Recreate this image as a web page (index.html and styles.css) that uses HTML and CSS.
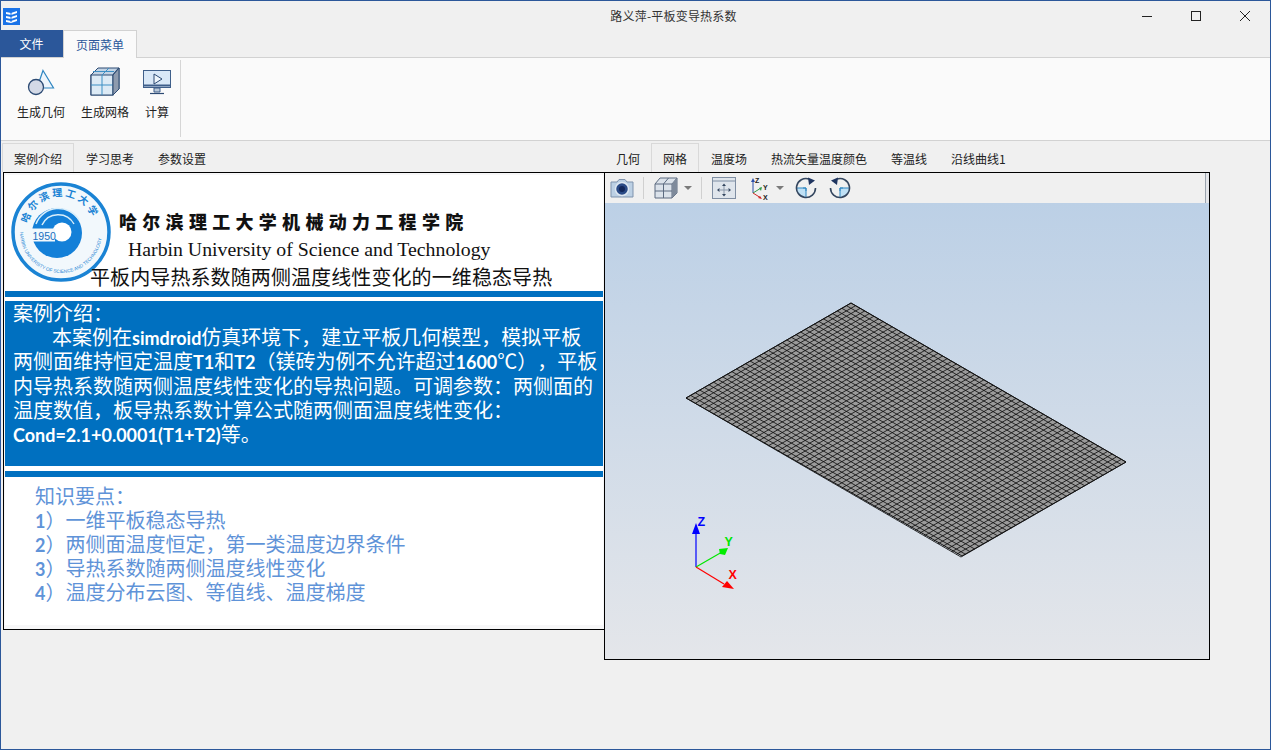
FILE: index.html
```html
<!DOCTYPE html>
<html lang="zh">
<head>
<meta charset="utf-8">
<title>路义萍-平板变导热系数</title>
<link rel="stylesheet" href="styles.css">
</head>
<body>
<div class="window">
  <header class="titlebar">
    <svg class="app-icon" width="17" height="17" viewBox="0 0 17 17"><rect width="17" height="17" fill="#1a73e8"/><path d="M3 4l5 1 6-2v2l-6 2-5-1zM3 8l5 1 6-2v2l-6 2-5-1zM3 12l5 1 6-2v2l-6 2-5-1z" fill="#fff"/><path d="M8 3v11" stroke="#1a73e8"/></svg>
    <div class="title">路义萍-平板变导热系数</div>
    <div class="win-btns">
      <svg width="12" height="12" viewBox="0 0 12 12"><path d="M1 6.500h10" stroke="#222"/></svg>
      <svg width="12" height="12" viewBox="0 0 12 12"><rect x="1.500" y="1.500" width="9" height="9" fill="none" stroke="#222"/></svg>
      <svg width="12" height="12" viewBox="0 0 12 12"><path d="M1 1l10 10M11 1L1 11" stroke="#222"/></svg>
    </div>
  </header>

  <nav class="menu-tabs">
    <div class="file-tab">文件</div>
    <div class="page-tab">页面菜单</div>
  </nav>

  <section class="ribbon">
    <div class="ribbon-group">
      <div class="ribbon-btn btn-geo">
        <svg width="28" height="28" viewBox="0 0 28 28"><path d="M16 2.500L26.500 20H10z" fill="#eef5fb" stroke="#2f86c1" stroke-width="1.200"/><circle cx="9" cy="19" r="7.500" fill="#d3d9e6" stroke="#2c4a73" stroke-width="1.300"/></svg>
        <span>生成几何</span>
      </div>
      <div class="ribbon-btn btn-mesh">
        <svg width="30" height="30" viewBox="0 0 30 30"><path d="M1 9l7-7h21v21l-6 6H1z" fill="#c3d3e4" stroke="#2c4a73"/><path d="M1 9h22v20H1z" fill="#dceaf5"/><path d="M1 9h22v20H1zM23 9l6-7" fill="none" stroke="#2c4a73" stroke-width="1.200"/><path d="M12 9v20M1 19h22M12 9l7-7M3 5.500h21" stroke="#3d8fc4" fill="none"/><path d="M23 9l6-7v21l-6 6z" fill="#8e9bae" stroke="#2c4a73"/></svg>
        <span>生成网格</span>
      </div>
      <div class="ribbon-btn btn-calc">
        <svg width="28" height="25" viewBox="0 0 28 25"><rect x=".5" y=".5" width="27" height="17" fill="#d9e8f7" stroke="#3f5f8a"/><path d="M.5 15.500h27" stroke="#3f5f8a" stroke-width="2"/><path d="M11 4l8 5-8 5z" fill="#eef5fb" stroke="#2c4a73"/><path d="M11 18h6v4h-6z" fill="#b9c8d8" stroke="#3f5f8a"/><path d="M7 23.500h14" stroke="#2c4a73" stroke-width="1.200"/></svg>
        <span>计算</span>
      </div>
    </div>
  </section>

  <main class="workspace">
    <section class="left-col">
      <div class="tabs">
        <div class="tab active">案例介绍</div>
        <div class="tab">学习思考</div>
        <div class="tab">参数设置</div>
      </div>
      <div class="slide-frame">
        <div class="slide">
          <div class="slide-head">
            <svg class="logo" width="102" height="102" viewBox="0 0 102 102">
              <defs>
                <path id="arcTop" d="M18.100 43.500A33.500 33.500 0 0 1 83.900 43.500"/>
                <path id="arcBot" d="M10 52A41 41 0 0 0 92 52"/>
              </defs>
              <circle cx="51" cy="52" r="48" fill="#f2f8fc" stroke="#1a83d4" stroke-width="3.500"/>
              <circle cx="47" cy="53" r="25" fill="#1480d8"/>
              <path d="M26 44A24 24 0 0 1 69 40" fill="none" stroke="#d9eefa" stroke-width="1.500"/>
              <path d="M32 45A18 18 0 0 1 64 44" fill="none" stroke="#d9eefa" stroke-width="1.500"/>
              <circle cx="52" cy="52" r="9.500" fill="#fff"/>
              <rect x="22" y="48.500" width="23" height="13" fill="#f2f8fc"/>
              <text class="logo-year" x="22.500" y="59.500">1950</text>
              <text class="logo-cn"><textPath href="#arcTop">哈尔滨理工大学</textPath></text>
              <text class="logo-en"><textPath href="#arcBot">HARBIN UNIVERSITY OF SCIENCE AND TECHNOLOGY</textPath></text>
            </svg>
            <div class="school-cn">哈尔滨理工大学机械动力工程学院</div>
            <div class="school-en">Harbin University of Science and Technology</div>
            <div class="slide-title">平板内导热系数随两侧温度线性变化的一维稳态导热</div>
          </div>
          <div class="stripe stripe-top"></div>
          <div class="intro">
            <p>案例介绍：</p>
            <p class="indent">本案例在<span class="lat">simdroid</span>仿真环境下，建立平板几何模型，模拟平板</p>
            <p>两侧面维持恒定温度<span class="lat">T1</span>和<span class="lat">T2</span>（镁砖为例不允许超过<span class="lat">1600</span>℃），平板</p>
            <p>内导热系数随两侧温度线性变化的导热问题。可调参数：两侧面的</p>
            <p>温度数值，板导热系数计算公式随两侧面温度线性变化：</p>
            <p><span class="lat">Cond=2.1+0.0001(T1+T2)</span>等。</p>
          </div>
          <div class="stripe stripe-bottom"></div>
          <div class="points">
            <p>知识要点：</p>
            <p><span class="lat">1</span>）一维平板稳态导热</p>
            <p><span class="lat">2</span>）两侧面温度恒定，第一类温度边界条件</p>
            <p><span class="lat">3</span>）导热系数随两侧温度线性变化</p>
            <p><span class="lat">4</span>）温度分布云图、等值线、温度梯度</p>
          </div>
        </div>
      </div>
    </section>

    <section class="right-col">
      <div class="tabs">
        <div class="tab">几何</div>
        <div class="tab active">网格</div>
        <div class="tab">温度场</div>
        <div class="tab">热流矢量温度颜色</div>
        <div class="tab">等温线</div>
        <div class="tab">沿线曲线1</div>
      </div>
      <div class="view-frame">
        <div class="toolbar">
          <svg class="t-cam" width="24" height="20" viewBox="0 0 24 20"><path d="M1 4h6l2-2.500h6L17 4h6v15H1z" fill="#bcd0e4" stroke="#7f93ad"/><circle cx="12" cy="11" r="6.500" fill="#2a4a86" stroke="#dfe8f2" stroke-width="1.500"/><circle cx="12" cy="11" r="3" fill="#12275a"/></svg>
          <span class="t-sep"></span>
          <svg class="t-cube" width="24" height="22" viewBox="0 0 24 22"><path d="M1 7l5-6h17v15l-5 5H1z" fill="#dbe2ea" stroke="#5c6b80"/><path d="M1 7h17v14M9.500 7v14M1 14h17M9.500 7l5-6M18 7l5-6" fill="none" stroke="#5c6b80"/><path d="M18 7l5-6v15l-5 5z" fill="#7e8a9b"/></svg>
          <span class="t-arrow"></span>
          <span class="t-sep"></span>
          <svg class="t-fit" width="24" height="22" viewBox="0 0 24 22"><rect x=".5" y=".5" width="23" height="21" fill="#dfe5ec" stroke="#7f8ea3"/><path d="M.5 4h23" stroke="#7f8ea3"/><path d="M12 6.500l2 2.500h-4zM12 19.500l-2-2.500h4zM5 13l2.500-2v4zM19 13l-2.500 2v-4z" fill="#34465f"/><path d="M12 9v8M7 13h10" stroke="#8b98aa"/></svg>
          <svg class="t-axes" width="22" height="24" viewBox="0 0 22 24"><path d="M5 17V5" stroke="#2b4ea8"/><path d="M5 17l8-5" stroke="#2e9a4a"/><path d="M5 17l8 5" stroke="#d02828"/><path d="M5 2l2 4H3z" fill="#2b4ea8"/><path d="M14 11l-1 4-2-3z" fill="#2e9a4a"/><path d="M14 23l-4-1 2-2z" fill="#d02828"/><text class="axis-small" x="7" y="6.500">Z</text><text class="axis-small" x="15" y="13.500">Y</text><text class="axis-small" x="15" y="23.500">X</text></svg>
          <span class="t-arrow"></span>
          <svg class="t-rot" width="22" height="22" viewBox="0 0 22 22"><path d="M11 11H1.500A9.500 9.500 0 0 0 11 20.500z" fill="#bfe0f5"/><path d="M8 11h3v3" fill="none" stroke="#2f86c1"/><path d="M1.500 11H11v9.500" fill="none" stroke="#2f86c1"/><path d="M14 2A9.500 9.500 0 1 0 20.500 11" fill="none" stroke="#34465f" stroke-width="1.600"/><path d="M13 .5l7 3-6 4.500z" fill="#1f3560"/></svg>
          <svg class="t-rot2" width="22" height="22" viewBox="0 0 22 22"><path d="M11 11H20.500A9.500 9.500 0 0 1 11 20.500z" fill="#bfe0f5"/><path d="M14 11h-3v3" fill="none" stroke="#2f86c1"/><path d="M20.500 11H11v9.500" fill="none" stroke="#2f86c1"/><path d="M8 2A9.500 9.500 0 1 1 1.500 11" fill="none" stroke="#34465f" stroke-width="1.600"/><path d="M9 .5l-7 3 6 4.500z" fill="#1f3560"/></svg>
        </div>
        <div class="viewport">
          <svg class="scene" width="605" height="455" viewBox="605 204 605 455">
            <polygon points="851,304 1126,463 962,557 686,399" fill="#9a9a9a"/>
            <path class="mesh" d="M851 304l275 159m-279.583-156.361l275 159m-279.583-156.361l275 159m-279.583-156.361l275 159m-279.583-156.361l275 159m-279.583-156.361l275 159m-279.583-156.361l275 159m-279.583-156.361l275 159m-279.583-156.361l275 159m-279.583-156.361l275 159m-279.583-156.361l275 159m-279.583-156.361l275 159m-279.583-156.361l275 159m-279.583-156.361l275 159m-279.583-156.361l275 159m-279.583-156.361l275 159m-279.583-156.361l275 159m-279.583-156.361l275 159m-279.583-156.361l275 159m-279.583-156.361l275 159m-279.583-156.361l275 159m-279.583-156.361l275 159m-279.583-156.361l275 159m-279.583-156.361l275 159m-279.583-156.361l275 159m-279.583-156.361l275 159m-279.583-156.361l275 159m-279.583-156.361l275 159m-279.583-156.361l275 159m-279.583-156.361l275 159m-279.583-156.361l275 159m-279.583-156.361l275 159m-279.583-156.361l275 159m-279.583-156.361l275 159m-279.583-156.361l275 159m-279.583-156.361l275 159m-279.583-156.361l275 159"/>
            <path class="mesh" d="M851 304l-165 95m169.583-92.350l-165 95m169.583-92.350l-165 95m169.583-92.350l-165 95m169.583-92.350l-165 95m169.583-92.350l-165 95m169.583-92.350l-165 95m169.583-92.350l-165 95m169.583-92.350l-165 95m169.583-92.350l-165 95m169.583-92.350l-165 95m169.583-92.350l-165 95m169.583-92.350l-165 95m169.583-92.350l-165 95m169.583-92.350l-165 95m169.583-92.350l-165 95m169.583-92.350l-165 95m169.583-92.350l-165 95m169.583-92.350l-165 95m169.583-92.350l-165 95m169.583-92.350l-165 95m169.583-92.350l-165 95m169.583-92.350l-165 95m169.583-92.350l-165 95m169.583-92.350l-165 95m169.583-92.350l-165 95m169.583-92.350l-165 95m169.583-92.350l-165 95m169.583-92.350l-165 95m169.583-92.350l-165 95m169.583-92.350l-165 95m169.583-92.350l-165 95m169.583-92.350l-165 95m169.583-92.350l-165 95m169.583-92.350l-165 95m169.583-92.350l-165 95m169.583-92.350l-165 95m169.583-92.350l-165 95m169.583-92.350l-165 95m169.583-92.350l-165 95m169.583-92.350l-165 95m169.583-92.350l-165 95m169.583-92.350l-165 95m169.583-92.350l-165 95m169.583-92.350l-165 95m169.583-92.350l-165 95m169.583-92.350l-165 95m169.583-92.350l-165 95m169.583-92.350l-165 95m169.583-92.350l-165 95m169.583-92.350l-165 95m169.583-92.350l-165 95m169.583-92.350l-165 95m169.583-92.350l-165 95m169.583-92.350l-165 95m169.583-92.350l-165 95m169.583-92.350l-165 95m169.583-92.350l-165 95m169.583-92.350l-165 95m169.583-92.350l-165 95m169.583-92.350l-165 95"/>
            <path class="mesh-edge" d="M851 304L1126 463 962 557 686 399z"/>
            <path d="M696 568V532" stroke="#0000ff" stroke-width="1.200"/>
            <path d="M696 524l4 11h-8z" fill="#0000ff"/>
            <path d="M696 568l26-15" stroke="#00e600" stroke-width="1.200"/>
            <path d="M728 549l-3 7-5-1-1-5z" fill="#00ee00"/>
            <path d="M696 568l28 17" stroke="#ff0000" stroke-width="1.200"/>
            <path d="M734 590l-12-2 5-6z" fill="#ff0000"/>
            <text class="axis z" x="697.500" y="527">Z</text>
            <text class="axis y" x="724.500" y="547">Y</text>
            <text class="axis x" x="728.500" y="580">X</text>
          </svg>
        </div>
      </div>
    </section>
  </main>
</div>
</body>
</html>
```
FILE: styles.css
```css
* { box-sizing: border-box; }
html, body { margin: 0; height: 100%; }
body {
  font-family: "Noto Sans CJK SC", "Liberation Sans", sans-serif;
  font-size: 12px;
  color: #222;
  background: #f0f0f0;
  text-spacing-trim: space-all;
}
p { margin: 0; }

.window {
  width: 1271px;
  height: 750px;
  border: 1px solid #2b579a;
  background: #f0f0f0;
  overflow: hidden;
  display: flex;
  flex-direction: column;
}

.titlebar {
  height: 29px;
  flex: none;
  display: flex;
  align-items: center;
  position: relative;
  padding-left: 2px;
}
.app-icon { flex: none; margin-top: 1px; }
.title {
  position: absolute;
  left: 0;
  right: 0;
  text-align: center;
  line-height: 29px;
  padding-left: 76px;
  letter-spacing: 0.200px;
  color: #333;
}
.win-btns {
  margin-left: auto;
  display: flex;
  gap: 37px;
  padding-right: 19px;
  align-items: center;
  position: relative;
}
.win-btns svg { display: block; }

.menu-tabs {
  height: 28px;
  flex: none;
  display: flex;
  position: relative;
  z-index: 1;
}
.file-tab {
  width: 62px;
  height: 27px;
  background: #2b579a;
  color: #fff;
  text-align: center;
  line-height: 28px;
  padding-right: 1px;
}
.page-tab {
  width: 74px;
  height: 28px;
  background: #fafafa;
  color: #2b579a;
  border: 1px solid #d2d2d2;
  border-bottom: 0;
  text-align: center;
  line-height: 28px;
}

.ribbon {
  height: 84px;
  flex: none;
  background: #fafafa;
  border-top: 1px solid #d2d2d2;
  border-bottom: 1px solid #d2d2d2;
  margin-top: -1px;
  padding: 2px 0 3px 1px;
  display: flex;
}
.ribbon-group {
  width: 179px;
  border-right: 1px solid #d6d6d6;
  display: flex;
  position: relative;
}
.ribbon-btn {
  display: flex;
  flex-direction: column;
  align-items: center;
  position: relative;
}
.ribbon-btn span { position: absolute; top: 43px; white-space: nowrap; line-height: 18px; }
.ribbon-btn svg { display: block; flex: none; }
.btn-geo { width: 48px; margin-left: 15px; padding-top: 8px; }
.btn-mesh { width: 48px; margin-left: 16px; padding-top: 6px; }
.btn-calc { width: 28px; margin-left: 14px; padding-top: 10px; }

.workspace {
  flex: 1;
  display: flex;
  align-items: flex-start;
  padding: 2px 0 0 1px;
  min-height: 0;
}
.left-col { width: 602px; flex: none; }
.right-col { width: 606px; flex: none; position: relative; }

.tabs {
  display: flex;
  height: 29px;
  position: relative;
  z-index: 1;
}
.tab {
  padding: 0 11px;
  line-height: 29px;
  height: 29px;
  border: 1px solid transparent;
  border-bottom: 0;
  white-space: nowrap;
  color: #222;
}
.tab.active {
  background: #f0f0f0;
  border-color: #d9d9d9;
}
.right-col .tab.active { margin-left: -1px; }

.slide-frame {
  width: 602px;
  height: 458px;
  margin-left: 1px;
  border: 1px solid #000;
  padding: 2px 1px 3px 1px;
  background: #f7f7f8;
}
.slide {
  height: 450px;
  background: #fff;
  position: relative;
  display: flex;
  flex-direction: column;
}
.slide-head {
  height: 116px;
  flex: none;
  position: relative;
  color: #111;
}
.logo { position: absolute; left: 5px; top: 5px; }
.logo-year { font: 400 10.500px "Liberation Sans", sans-serif; fill: #1a6fc0; }
.logo-cn { font: 700 10px "Noto Sans CJK SC", sans-serif; fill: #1a83d4; letter-spacing: 2.500px; }
.logo-en { font: 400 4.700px "Liberation Sans", sans-serif; fill: #1a83d4; }
.school-cn {
  position: absolute;
  left: 114px;
  top: 33px;
  font-size: 18px;
  font-weight: 900;
  letter-spacing: 5.300px;
  line-height: 26px;
  white-space: nowrap;
}
.school-en {
  position: absolute;
  left: 123px;
  top: 62px;
  font-family: "Liberation Serif", serif;
  font-size: 19.800px;
  line-height: 24px;
  white-space: nowrap;
}
.slide-title {
  position: absolute;
  left: 85px;
  top: 89px;
  font-size: 20px;
  line-height: 26px;
  letter-spacing: 0.100px;
  white-space: nowrap;
}
.stripe { height: 6px; background: #0070c0; flex: none; }
.intro {
  height: 165px;
  flex: none;
  margin-top: 4px;
  background: #0070c0;
  color: #fff;
  font-size: 20px;
  line-height: 24.200px;
  padding: 0 0 0 8px;
  white-space: nowrap;
}
.intro .indent { padding-left: 39px; }
.lat { font-family: Lato, sans-serif; font-size: 18px; font-weight: 700; line-height: 0; }
.stripe-bottom { margin-top: 5px; }
.points {
  padding: 7px 0 0 30px;
  font-size: 20px;
  line-height: 24px;
  color: #5f93d8;
  white-space: nowrap;
}

.view-frame {
  width: 606px;
  height: 488px;
  border: 1px solid #000;
  background: #e4e6ea;
  display: flex;
  flex-direction: column;
}
.toolbar {
  height: 31px;
  flex: none;
  background: #f0f0f0;
  border-right: 1px solid #9aa3ad;
  border-bottom: 1px solid #9aa3ad;
  margin-right: 3px;
  display: flex;
  align-items: center;
  padding-left: 5px;
}
.toolbar svg { display: block; flex: none; }
.t-sep { width: 1px; height: 22px; background: #d0d0d0; margin: 0 10px 0 9px; flex: none; }
.t-arrow {
  width: 0; height: 0; flex: none;
  border-left: 4px solid transparent;
  border-right: 4px solid transparent;
  border-top: 4px solid #7a7a7a;
  margin-left: 6px;
}
.t-axes { margin-left: 12px; }
.t-rot { margin-left: 11px; }
.t-rot2 { margin-left: 12px; }
.axis-small { font: 700 7px "Liberation Sans", sans-serif; fill: #222; }

.viewport {
  flex: 1;
  min-height: 0;
  margin-top: -1px;
  background: linear-gradient(180deg, #bcd0e6 0%, #e4e6ea 100%);
}
.scene { display: block; }
.mesh { fill: none; stroke: #111; stroke-width: 0.850; }
.mesh-edge { fill: none; stroke: #111; stroke-width: 1; }
.axis { font: 700 12.500px "Liberation Sans", sans-serif; }
.axis.z { fill: #0000ff; }
.axis.y { fill: #00e600; }
.axis.x { fill: #ff0000; }
```
